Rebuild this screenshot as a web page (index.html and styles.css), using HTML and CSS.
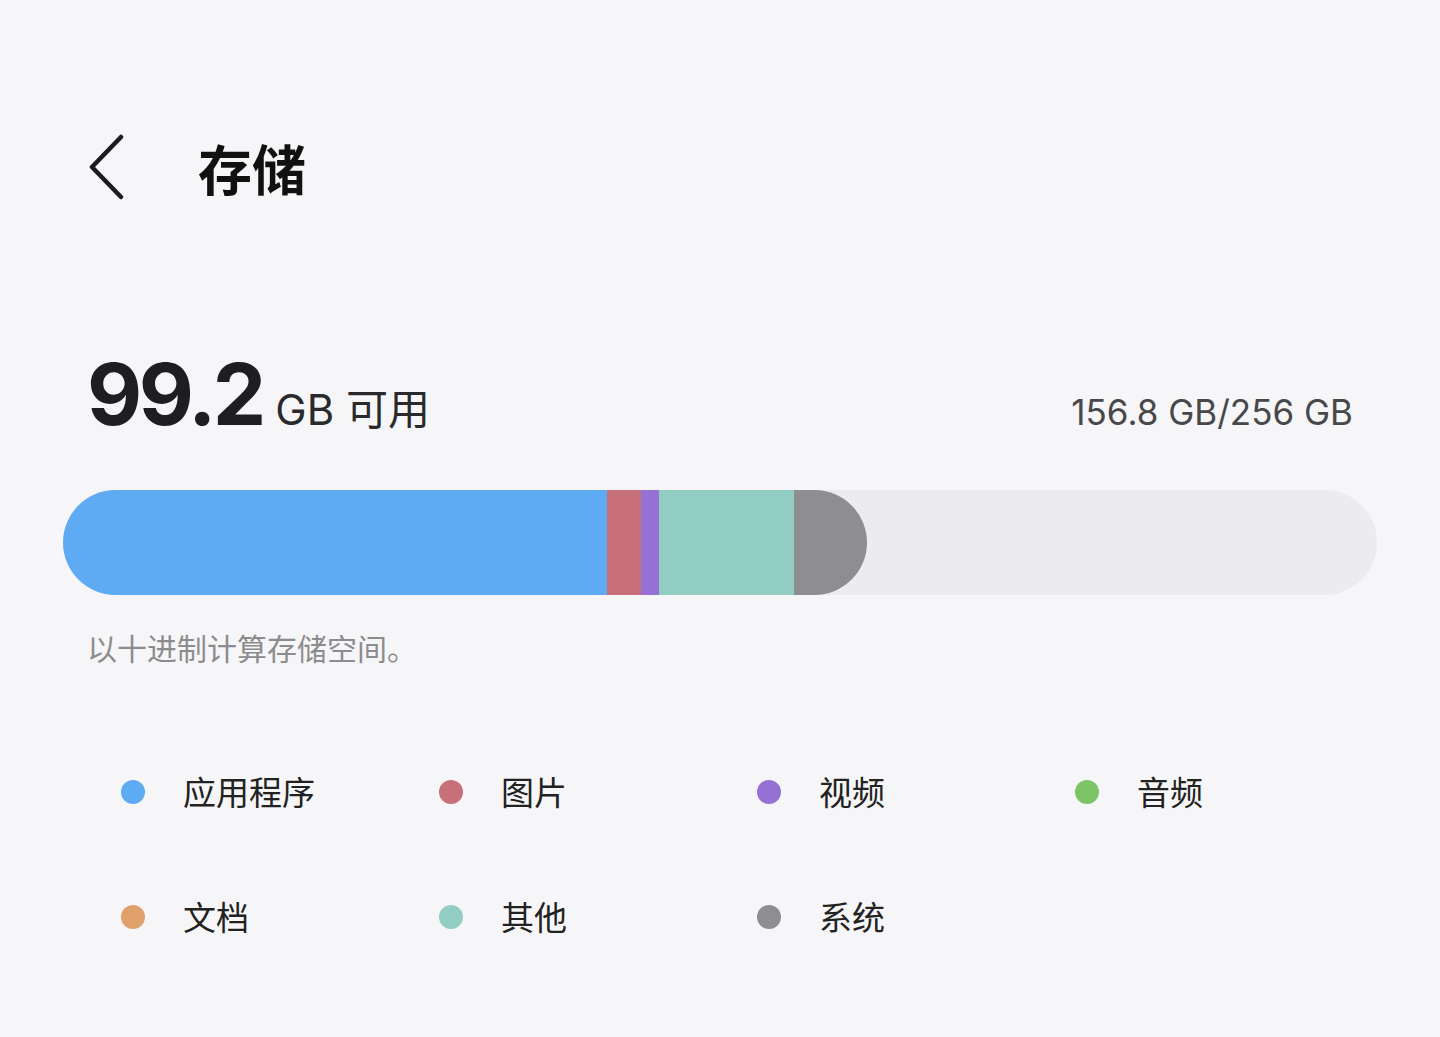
FILE: index.html
```html
<!DOCTYPE html>
<html lang="zh-CN">
<head>
  <meta charset="UTF-8">
  <meta name="viewport" content="width=device-width, initial-scale=1.0">
  <title>存储</title>
  <link rel="stylesheet" href="styles.css">
</head>
<body>
  <header class="topbar">
    <a class="back" href="#">
      <svg width="40" height="68" viewBox="0 0 40 68">
        <polyline points="33,3 4,33 33,63" fill="none" stroke="#1c1c1e" stroke-width="4.5" stroke-linecap="round" stroke-linejoin="round"/>
      </svg>
    </a>
    <h1>存储</h1>
  </header>

  <main class="content">
    <div class="summary">
      <div class="free">
        <span class="free-num">99.2</span>
        <span class="free-unit">GB 可用</span>
      </div>
      <div class="total">156.8 GB/256 GB</div>
    </div>

    <div class="bar">
      <div class="bar-fill">
        <span class="seg apps" style="width: 544px"></span>
        <span class="seg photos" style="width: 34px"></span>
        <span class="seg videos" style="width: 18px"></span>
        <span class="seg other" style="width: 135px"></span>
        <span class="seg system" style="width: 73px"></span>
      </div>
    </div>

    <p class="note">以十进制计算存储空间。</p>

    <ul class="legend">
      <li><i class="dot apps"></i>应用程序</li>
      <li><i class="dot photos"></i>图片</li>
      <li><i class="dot videos"></i>视频</li>
      <li><i class="dot audio"></i>音频</li>
      <li><i class="dot docs"></i>文档</li>
      <li><i class="dot other"></i>其他</li>
      <li><i class="dot system"></i>系统</li>
    </ul>
  </main>
</body>
</html>
```

FILE: styles.css
```css
* {
  margin: 0;
  padding: 0;
  box-sizing: border-box;
}

body {
  background-color: #f6f6f8;
  color: #1c1c1e;
  font-family: Inter, "Noto Sans CJK SC", sans-serif;
  height: 1037px;
  overflow: hidden;
}

.topbar {
  display: flex;
  align-items: center;
  height: 68px;
  margin-top: 134px;
  padding-left: 88px;
}

.back {
  display: block;
  width: 40px;
  height: 68px;
}

.topbar h1 {
  margin-left: 70px;
  font-family: "Noto Sans CJK SC", sans-serif;
  font-size: 54px;
  font-weight: 700;
  line-height: 1;
  color: #111;
}

.content {
  padding: 0 63px;
}

.summary {
  display: flex;
  justify-content: space-between;
  align-items: baseline;
  padding: 0 24px;
  margin-top: 150px;
}

.free-num {
  font-size: 85px;
  font-weight: 700;
  letter-spacing: -3.5px;
  line-height: 1;
  color: #1e1e20;
}

.free-unit {
  margin-left: 8px;
  font-size: 42px;
  color: #2a2a2c;
}

.total {
  font-size: 35px;
  color: #48484a;
}

.bar {
  height: 105px;
  margin-top: 53px;
  background: #ececef;
  border-radius: 53px;
  overflow: hidden;
}

.bar-fill {
  display: flex;
  height: 100%;
  width: max-content;
  border-radius: 0 53px 53px 0;
  overflow: hidden;
}

.seg {
  display: block;
  height: 100%;
}

.apps { background: #5eaaf3; }
.photos { background: #c8707a; }
.videos { background: #9571d4; }
.audio { background: #7cc466; }
.docs { background: #e0a06b; }
.other { background: #91cdc2; }
.system { background: #8e8e92; }

.note {
  margin-top: 30px;
  padding-left: 24px;
  font-family: "Noto Sans CJK SC", sans-serif;
  font-size: 30px;
  color: #8c8c8e;
}

.legend {
  list-style: none;
  display: grid;
  grid-template-columns: repeat(4, 318px);
  row-gap: 88px;
  margin-top: 104px;
  padding-left: 58px;
}

.legend li {
  display: flex;
  align-items: center;
  font-family: "Noto Sans CJK SC", sans-serif;
  font-size: 33px;
  line-height: 37px;
  color: #222;
}

.dot {
  width: 24px;
  height: 24px;
  border-radius: 50%;
  margin-right: 38px;
}
```
